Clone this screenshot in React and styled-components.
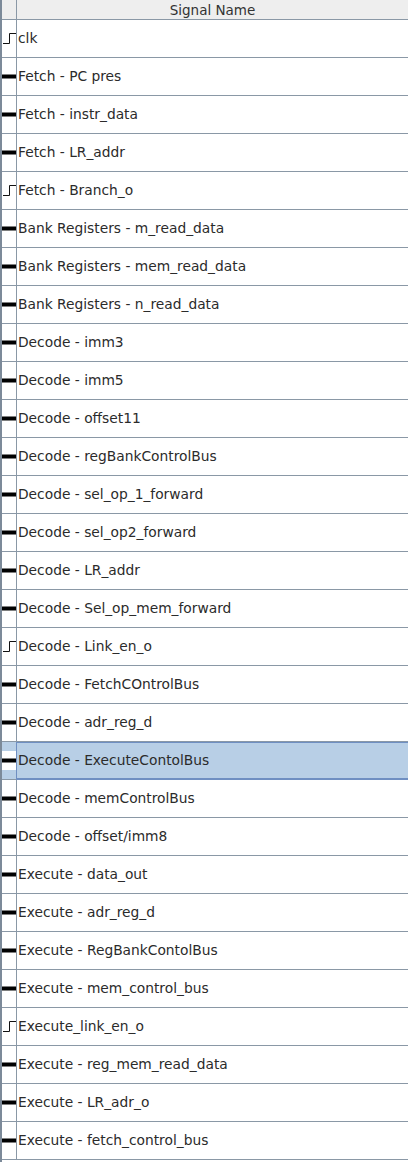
import React from 'react'
import styled, { createGlobalStyle } from 'styled-components'

const GlobalStyle = createGlobalStyle`
  html, body {
    margin: 0;
    padding: 0;
    background: #ffffff;
  }
  body {
    font-family: 'DejaVu Sans', 'Liberation Sans', sans-serif;
  }
`

const signals = [
  { name: 'clk', kind: 'bit' },
  { name: 'Fetch - PC pres', kind: 'bus' },
  { name: 'Fetch - instr_data', kind: 'bus' },
  { name: 'Fetch - LR_addr', kind: 'bus' },
  { name: 'Fetch - Branch_o', kind: 'bit' },
  { name: 'Bank Registers - m_read_data', kind: 'bus' },
  { name: 'Bank Registers - mem_read_data', kind: 'bus' },
  { name: 'Bank Registers - n_read_data', kind: 'bus' },
  { name: 'Decode - imm3', kind: 'bus' },
  { name: 'Decode - imm5', kind: 'bus' },
  { name: 'Decode - offset11', kind: 'bus' },
  { name: 'Decode - regBankControlBus', kind: 'bus' },
  { name: 'Decode - sel_op_1_forward', kind: 'bus' },
  { name: 'Decode - sel_op2_forward', kind: 'bus' },
  { name: 'Decode - LR_addr', kind: 'bus' },
  { name: 'Decode - Sel_op_mem_forward', kind: 'bus' },
  { name: 'Decode - Link_en_o', kind: 'bit' },
  { name: 'Decode - FetchCOntrolBus', kind: 'bus' },
  { name: 'Decode - adr_reg_d', kind: 'bus' },
  { name: 'Decode - ExecuteContolBus', kind: 'bus', selected: true },
  { name: 'Decode - memControlBus', kind: 'bus' },
  { name: 'Decode - offset/imm8', kind: 'bus' },
  { name: 'Execute - data_out', kind: 'bus' },
  { name: 'Execute - adr_reg_d', kind: 'bus' },
  { name: 'Execute - RegBankContolBus', kind: 'bus' },
  { name: 'Execute - mem_control_bus', kind: 'bus' },
  { name: 'Execute_link_en_o', kind: 'bit' },
  { name: 'Execute - reg_mem_read_data', kind: 'bus' },
  { name: 'Execute - LR_adr_o', kind: 'bus' },
  { name: 'Execute - fetch_control_bus', kind: 'bus' },
]

const Panel = styled.div`
  width: 408px;
  height: 1162px;
  border-left: 2px solid #7c8a99;
  box-sizing: border-box;
  overflow: hidden;
  background: #ffffff;
`

const HeaderRow = styled.div`
  display: grid;
  grid-template-columns: 14px 1fr;
  height: 19px;
  background: #eeeeee;
  border-bottom: 1px solid #8a98a6;
`

const HeaderCell = styled.div`
  border-left: ${(p) => (p.$first ? 'none' : '1px solid #8a98a6')};
  display: flex;
  align-items: center;
  justify-content: center;
  font-size: 13.5px;
  color: #333333;
`

const Row = styled.div`
  display: grid;
  grid-template-columns: 14px 1fr;
  height: 37px;
  border-bottom: 1px solid #8a98a6;
  background: ${(p) => (p.$selected ? '#b8cfe6' : '#ffffff')};
`

const IconCell = styled.div`
  display: flex;
  align-items: center;
  justify-content: center;
`

const NameCell = styled.div`
  display: flex;
  align-items: center;
  padding: 0 0 1px 1px;
  font-size: 13.8px;
  color: #2b2b2b;
  white-space: nowrap;
  border-left: 1px solid ${(p) => (p.$selected ? '#6f8fc2' : '#8a98a6')};
  box-shadow: ${(p) =>
    p.$selected ? 'inset 0 1px 0 #6f8fc2, inset 0 -1px 0 #6f8fc2' : 'none'};
  margin-bottom: ${(p) => (p.$selected ? '-1px' : '0')};
  ${(p) => (p.$selected ? 'border-bottom: 1px solid #6f8fc2;' : '')}
`

const SignalIcon = ({ kind, selected }) => {
  if (kind === 'bit') {
    return (
      <svg width="14" height="37" viewBox="0 0 14 37">
        <path d="M1 23.5 H7.5 V13.5 H14" fill="none" stroke="#111" strokeWidth="1" />
      </svg>
    )
  }
  return (
    <svg width="14" height="37" viewBox="0 0 14 37">
      {selected && <rect x="0" y="9" width="14" height="19" fill="#ffffff" />}
      <rect x="0" y="16.5" width="14" height="4" fill="#000" />
    </svg>
  )
}

export default function App() {
  return (
    <>
      <GlobalStyle />
      <Panel>
        <HeaderRow>
          <HeaderCell $first />
          <HeaderCell>Signal Name</HeaderCell>
        </HeaderRow>
        {signals.map((s) => (
          <Row key={s.name} $selected={s.selected}>
            <IconCell>
              <SignalIcon kind={s.kind} selected={s.selected} />
            </IconCell>
            <NameCell $selected={s.selected}>{s.name}</NameCell>
          </Row>
        ))}
      </Panel>
    </>
  )
}
